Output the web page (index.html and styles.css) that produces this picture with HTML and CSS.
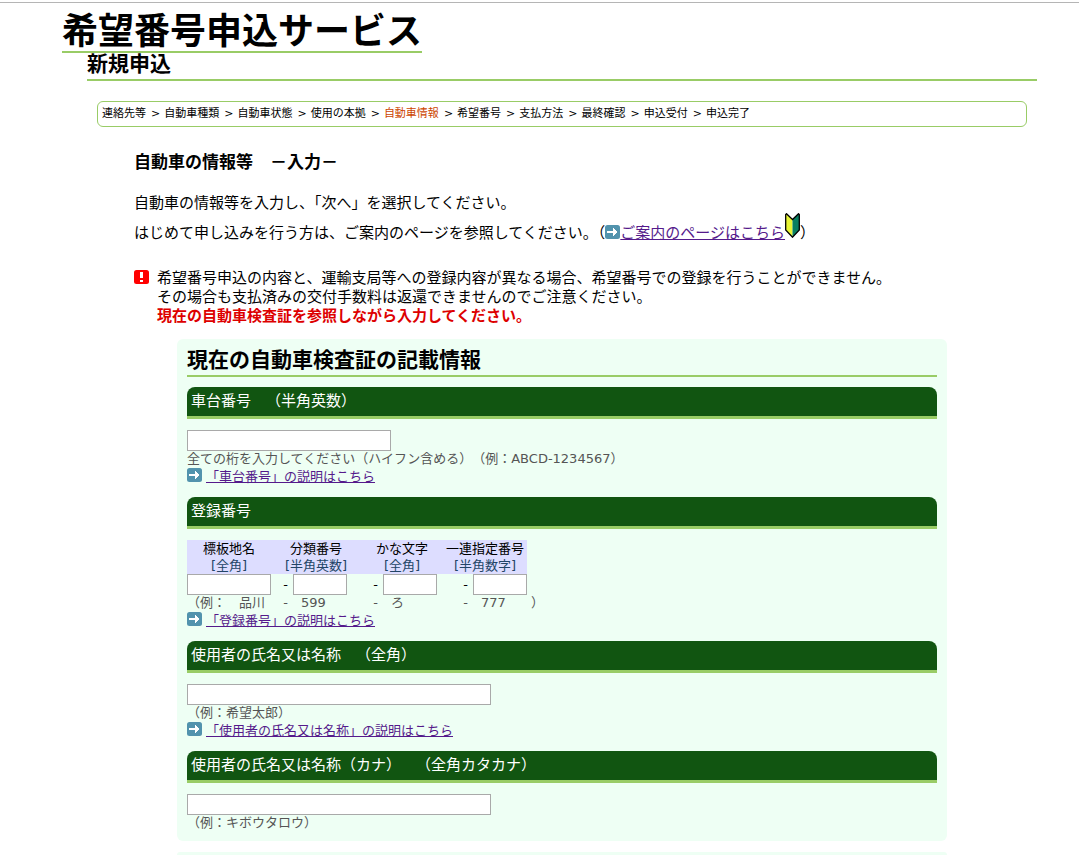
FILE: index.html
```html
<!DOCTYPE html>
<html lang="ja">
<head>
<meta charset="utf-8">
<title>希望番号申込サービス</title>
<link rel="stylesheet" href="styles.css">
</head>
<body>
<svg class="defs" aria-hidden="true">
  <symbol id="arrow" viewBox="0 0 15 14">
    <rect width="15" height="14" rx="2.5" fill="#5293ad"/>
    <path d="M2 6H8V3H9V4H10V5H11V6H12V8H11V9H10V10H9V11H8V8H2Z" fill="#fff"/>
  </symbol>
</svg>
<div class="page">
  <header>
    <h1 class="site-title">希望番号申込サービス</h1>
    <h2 class="page-title">新規申込</h2>
  </header>
  <nav class="steps" aria-label="申込手順">
    <ol class="steps-list">
      <li>連絡先等</li>
      <li>自動車種類</li>
      <li>自動車状態</li>
      <li>使用の本拠</li>
      <li aria-current="step"><span class="current">自動車情報</span></li>
      <li>希望番号</li>
      <li>支払方法</li>
      <li>最終確認</li>
      <li>申込受付</li>
      <li>申込完了</li>
    </ol>
  </nav>
  <main class="content">
    <h2 class="lead">自動車の情報等　－入力－</h2>
    <p class="intro">自動車の情報等を入力し、「次へ」を選択してください。<br>はじめて申し込みを行う方は、ご案内のページを参照してください。（<svg class="arrow inline" aria-hidden="true"><use href="#arrow"/></svg><a href="#guide">ご案内のページはこちら</a><svg class="beginner" viewBox="0 0 15 25" aria-hidden="true"><path d="M.7 1.5L1.5.7L7.5 6.5V24.2L.7 17Z" fill="#e8f535"/><path d="M7.5 6.5L13.5.7L14.3 1.5V17L7.5 24.2Z" fill="#087e60"/><path d="M7.5 6.5L1.5 .7L.7 1.5V17L7.5 24.2L14.3 17V1.5L13.5 .7Z" fill="none" stroke="#000" stroke-width="1.3"/></svg>）</p>
    <div class="warning">
      <svg class="alert" viewBox="0 0 15 14" aria-hidden="true"><rect width="15" height="14" rx="2.5" fill="#f00"/><path d="M6 2H9V8H6ZM6 10H9V12H6Z" fill="#fff"/></svg>
      <p class="warning-text">希望番号申込の内容と、運輸支局等への登録内容が異なる場合、希望番号での登録を行うことができません。<br>その場合も支払済みの交付手数料は返還できませんのでご注意ください。<br><strong>現在の自動車検査証を参照しながら入力してください。</strong></p>
    </div>
    <form class="panels">
      <section class="panel">
        <h3 class="panel-title">現在の自動車検査証の記載情報</h3>

        <div class="field">
          <h4 class="bar"><label for="chassis">車台番号　（半角英数）</label></h4>
          <input class="box medium" id="chassis" type="text">
          <p class="hint">全ての桁を入力してください（ハイフン含める）（例：ABCD-1234567）</p>
          <p class="help"><svg class="arrow" aria-hidden="true"><use href="#arrow"/></svg><a href="#chassis-help">「車台番号」の説明はこちら</a></p>
        </div>

        <div class="field">
          <h4 class="bar">登録番号</h4>
          <table class="plate">
            <colgroup>
              <col class="c-place"><col class="c-dash"><col class="c-box"><col class="c-gap"><col class="c-dash"><col class="c-box"><col class="c-narrow"><col class="c-wide"><col class="c-box"><col class="c-end">
            </colgroup>
            <thead>
              <tr>
                <th><label for="place">標板地名<br><span>[全角]</span></label></th>
                <th colspan="3"><label for="class">分類番号<br><span>[半角英数]</span></label></th>
                <th colspan="3"><label for="kana">かな文字<br><span>[全角]</span></label></th>
                <th colspan="2"><label for="serial">一連指定番号<br><span>[半角数字]</span></label></th>
              </tr>
            </thead>
            <tbody>
              <tr>
                <td><input class="box" id="place" type="text"></td>
                <td class="dash">-</td>
                <td><input class="box" id="class" type="text"></td>
                <td></td>
                <td class="dash">-</td>
                <td><input class="box" id="kana" type="text"></td>
                <td></td>
                <td class="dash">-</td>
                <td><input class="box" id="serial" type="text"></td>
              </tr>
              <tr class="example">
                <td>（例：　品川</td>
                <td class="dash">-</td>
                <td class="sample">599</td>
                <td></td>
                <td class="dash">-</td>
                <td class="sample">ろ</td>
                <td></td>
                <td class="dash">-</td>
                <td class="sample">777</td>
                <td class="close">）</td>
              </tr>
            </tbody>
          </table>
          <p class="help"><svg class="arrow" aria-hidden="true"><use href="#arrow"/></svg><a href="#plate-help">「登録番号」の説明はこちら</a></p>
        </div>

        <div class="field">
          <h4 class="bar"><label for="name">使用者の氏名又は名称　（全角）</label></h4>
          <input class="box long" id="name" type="text">
          <p class="hint">（例：希望太郎）</p>
          <p class="help"><svg class="arrow" aria-hidden="true"><use href="#arrow"/></svg><a href="#name-help">「使用者の氏名又は名称」の説明はこちら</a></p>
        </div>

        <div class="field">
          <h4 class="bar"><label for="name-kana">使用者の氏名又は名称（カナ）　（全角カタカナ）</label></h4>
          <input class="box long" id="name-kana" type="text">
          <p class="hint">（例：キボウタロウ）</p>
        </div>
      </section>
      <section class="panel-next"></section>
    </form>
  </main>
</div>
</body>
</html>
```
FILE: styles.css
```css
* { box-sizing: border-box; }

body {
  margin: 0;
  padding-top: 2px;
  background: #fff;
  color: #000;
  font-family: "DejaVu Sans", "Noto Sans CJK JP", sans-serif;
  font-size: 15px;
  text-spacing-trim: space-all;
}

h1, h2, h3, h4, p, ol { margin: 0; padding: 0; }

a { color: #551a8b; }

.defs { display: none; }

.page {
  border-top: 1px solid #b5b5b5;
  padding: 10px 42px 0 62px;
}

.site-title {
  width: fit-content;
  border-bottom: 2px solid #99cc66;
  font-size: 36px;
  line-height: 38px;
}

.page-title {
  margin-left: 25px;
  padding-bottom: 4px;
  border-bottom: 2px solid #99cc66;
  font-size: 21px;
  line-height: 22px;
}

.steps {
  margin: 20px 10px 0 35px;
  padding: 0 4px;
  border: 1px solid #99cc66;
  border-radius: 6px;
  font-size: 11px;
  line-height: 24px;
}

.steps-list {
  display: flex;
  flex-wrap: wrap;
  list-style: none;
}

.steps-list li + li::before {
  content: ">";
  margin: 0 4px 0 5px;
}

.current { color: #cc4400; }

.content { padding: 23px 48px 0 72px; }

.lead {
  font-size: 17px;
  line-height: 24px;
}

.intro {
  margin-top: 14px;
  line-height: 30px;
  text-spacing-trim: normal;
}

.arrow {
  flex: none;
  width: 15px;
  height: 14px;
}

.inline { vertical-align: -1px; }

.beginner {
  width: 15px;
  height: 25px;
  margin: -8px 0;
  vertical-align: 8px;
}

.warning {
  display: flex;
  gap: 8px;
  margin-top: 21px;
  line-height: 19px;
}

.alert {
  flex: none;
  width: 15px;
  height: 14px;
  margin-top: 1px;
}

.warning strong { color: #dd0000; }

.panels { margin: 13px 42px 0 43px; }

.panel {
  padding: 8px 10px 10px;
  border-radius: 6px;
  background: #eefff4;
}

.panel-next {
  margin-top: 11px;
  padding-top: 3px;
  border-radius: 6px 6px 0 0;
  background: #eefff4;
}

.panel-title {
  padding-bottom: 2px;
  border-bottom: 2px solid #99cc66;
  font-size: 21px;
  line-height: 26px;
}

.field { margin-top: 10px; }

.bar {
  margin-bottom: 11px;
  padding: 0 4px;
  border-bottom: 3px solid #99cc66;
  border-radius: 8px 8px 0 0;
  background: #115511;
  color: #fff;
  font-size: 15px;
  font-weight: normal;
  line-height: 29px;
}

.box {
  display: block;
  width: 100%;
  height: 21px;
  padding: 1px 2px;
  border: 1px solid #a9a9a9;
  background: #fff;
  font-size: 13px;
}

.medium { max-width: 204px; }

.long { max-width: 304px; }

.hint {
  color: #555;
  font-size: 13px;
  line-height: 16px;
}

.help {
  display: flex;
  gap: 4px;
  font-size: 13px;
  line-height: 20px;
}

.help .arrow { margin-top: 1px; }

.plate {
  width: 354px;
  table-layout: fixed;
  border-collapse: collapse;
  font-size: 13px;
  line-height: 17px;
}

.plate th, .plate td { padding: 0; }

.plate th {
  background: #ddddff;
  font-weight: normal;
  white-space: nowrap;
}

.plate th span { color: #224466; }

.c-place { width: 84px; }
.c-dash { width: 22px; }
.c-box { width: 54px; }
.c-gap { width: 14px; }
.c-narrow { width: 6px; }
.c-wide { width: 30px; }
.c-end { width: 14px; }

.plate .dash {
  padding-right: 5px;
  text-align: right;
}

.example {
  color: #555;
  line-height: 16px;
  white-space: nowrap;
}

.plate .sample { padding-left: 8px; }

.plate .close { padding-left: 4px; }
```
